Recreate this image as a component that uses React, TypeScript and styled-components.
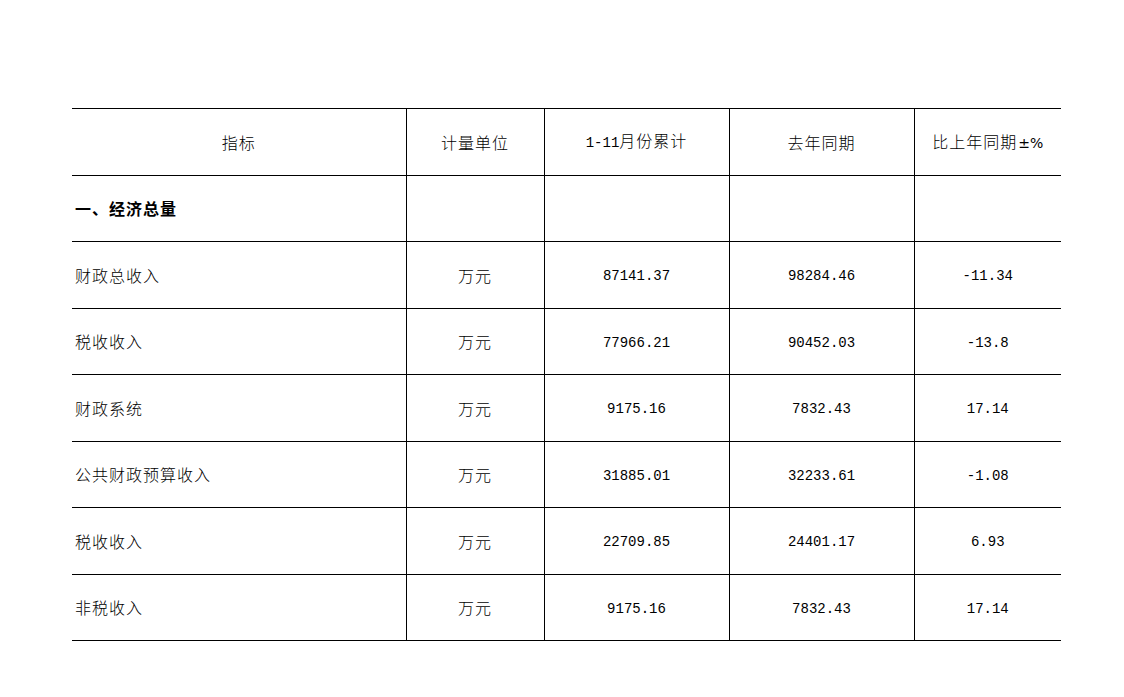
import React from "react";
import styled, { createGlobalStyle } from "styled-components";

const GlobalStyle = createGlobalStyle`
  html, body {
    margin: 0;
    padding: 0;
    background: #ffffff;
  }
  body {
    font-family: "Noto Sans CJK SC", "Noto Sans", sans-serif;
    color: #000;
  }
`;

const Page = styled.div`
  padding: 108px 0 0 72px;
`;

const Table = styled.table`
  border-collapse: collapse;
  table-layout: fixed;
  width: 989px;
`;

const Row = styled.tr`
  height: 66.5px;
`;

const Cell = styled.td<{ $align?: "left" | "center"; $bold?: boolean }>`
  border-top: 1px solid #000;
  border-bottom: 1px solid #000;
  border-left: 1px solid #000;
  padding: 0 3px;
  text-align: ${(p) => p.$align ?? "center"};
  vertical-align: middle;
  font-size: 16px;
  letter-spacing: 1px;
  font-weight: ${(p) => (p.$bold ? 700 : 300)};
  line-height: 20px;

  &:first-child {
    border-left: none;
  }
`;

const Num = styled.span`
  font-family: "Liberation Mono", "DejaVu Sans Mono", monospace;
  font-size: 14px;
  font-weight: 400;
  letter-spacing: 0;
`;

const Sign = styled.span`
  font-family: "DejaVu Sans", sans-serif;
  font-size: 14px;
  font-weight: 400;
  letter-spacing: 0;
  margin-left: 1px;
`;

interface Item {
  name: string;
  unit: string;
  total: string;
  last: string;
  change: string;
}

const items: Item[] = [
  { name: "财政总收入", unit: "万元", total: "87141.37", last: "98284.46", change: "-11.34" },
  { name: "税收收入", unit: "万元", total: "77966.21", last: "90452.03", change: "-13.8" },
  { name: "财政系统", unit: "万元", total: "9175.16", last: "7832.43", change: "17.14" },
  { name: "公共财政预算收入", unit: "万元", total: "31885.01", last: "32233.61", change: "-1.08" },
  { name: "税收收入", unit: "万元", total: "22709.85", last: "24401.17", change: "6.93" },
  { name: "非税收入", unit: "万元", total: "9175.16", last: "7832.43", change: "17.14" },
];

const App = () => {
  return (
    <>
      <GlobalStyle />
      <Page>
        <Table>
          <colgroup>
            <col style={{ width: 334 }} />
            <col style={{ width: 138 }} />
            <col style={{ width: 185 }} />
            <col style={{ width: 185 }} />
            <col style={{ width: 147 }} />
          </colgroup>
          <tbody>
            <Row>
              <Cell>指标</Cell>
              <Cell>计量单位</Cell>
              <Cell>
                <Num>1-11</Num>月份累计
              </Cell>
              <Cell>去年同期</Cell>
              <Cell>
                比上年同期<Sign>±%</Sign>
              </Cell>
            </Row>
            <Row>
              <Cell $align="left" $bold>
                一、经济总量
              </Cell>
              <Cell />
              <Cell />
              <Cell />
              <Cell />
            </Row>
            {items.map((it, i) => (
              <Row key={i}>
                <Cell $align="left">{it.name}</Cell>
                <Cell>{it.unit}</Cell>
                <Cell>
                  <Num>{it.total}</Num>
                </Cell>
                <Cell>
                  <Num>{it.last}</Num>
                </Cell>
                <Cell>
                  <Num>{it.change}</Num>
                </Cell>
              </Row>
            ))}
          </tbody>
        </Table>
      </Page>
    </>
  );
};

export default App;
